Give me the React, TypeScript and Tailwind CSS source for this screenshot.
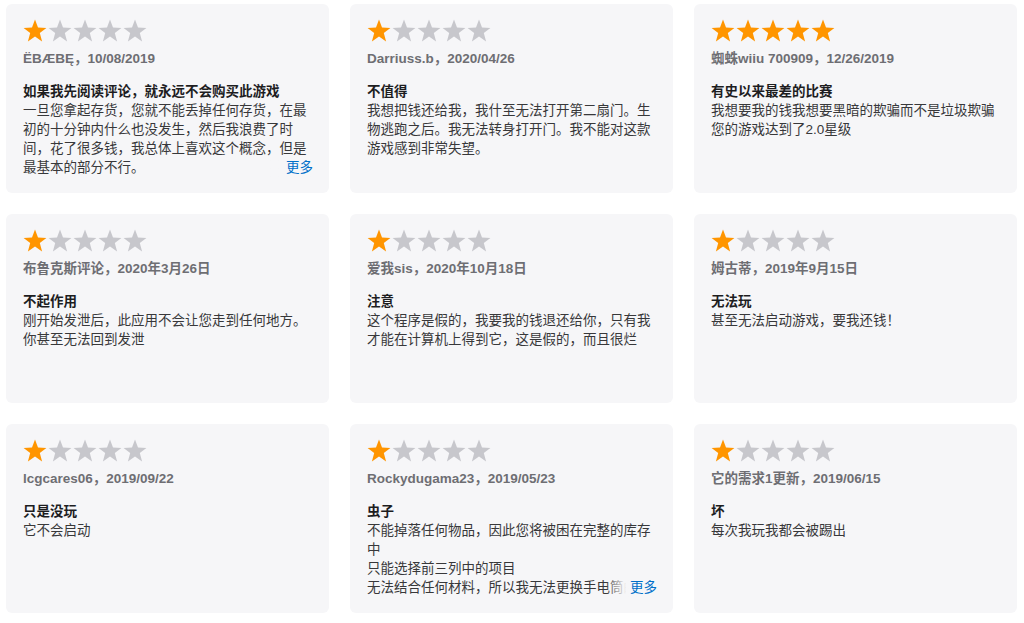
import React from "react";

type Review = {
  stars: number;
  author: string;
  date: string;
  title: string;
  body: string[];
  more?: boolean;
};

const reviews: Review[] = [
  {
    stars: 1,
    author: "ËBÆBĘ",
    date: "10/08/2019",
    title: "如果我先阅读评论，就永远不会购买此游戏",
    body: ["一旦您拿起存货，您就不能丢掉任何存货，在最初的十分钟内什么也没发生，然后我浪费了时间，花了很多钱，我总体上喜欢这个概念，但是最基本的部分不行。"],
    more: true,
  },
  {
    stars: 1,
    author: "Darriuss.b",
    date: "2020/04/26",
    title: "不值得",
    body: ["我想把钱还给我，我什至无法打开第二扇门。生物逃跑之后。我无法转身打开门。我不能对这款游戏感到非常失望。"],
  },
  {
    stars: 5,
    author: "蜘蛛wiiu 700909",
    date: "12/26/2019",
    title: "有史以来最差的比赛",
    body: ["我想要我的钱我想要黑暗的欺骗而不是垃圾欺骗您的游戏达到了2.0星级"],
  },
  {
    stars: 1,
    author: "布鲁克斯评论",
    date: "2020年3月26日",
    title: "不起作用",
    body: ["刚开始发泄后，此应用不会让您走到任何地方。你甚至无法回到发泄"],
  },
  {
    stars: 1,
    author: "爱我sis",
    date: "2020年10月18日",
    title: "注意",
    body: ["这个程序是假的，我要我的钱退还给你，只有我才能在计算机上得到它，这是假的，而且很烂"],
  },
  {
    stars: 1,
    author: "姆古蒂",
    date: "2019年9月15日",
    title: "无法玩",
    body: ["甚至无法启动游戏，要我还钱！"],
  },
  {
    stars: 1,
    author: "lcgcares06",
    date: "2019/09/22",
    title: "只是没玩",
    body: ["它不会启动"],
  },
  {
    stars: 1,
    author: "Rockydugama23",
    date: "2019/05/23",
    title: "虫子",
    body: [
      "不能掉落任何物品，因此您将被困在完整的库存中",
      "只能选择前三列中的项目",
      "无法结合任何材料，所以我无法更换手电筒的电池，这真的很烦人",
    ],
    more: true,
  },
  {
    stars: 1,
    author: "它的需求1更新",
    date: "2019/06/15",
    title: "坏",
    body: ["每次我玩我都会被踢出"],
  },
];

function Star({ on }: { on: boolean }) {
  return (
    <svg width="25" height="24" viewBox="0 0 25 24" className="shrink-0">
      <polygon
        points="12,0.5 15,8.6 23.4,8.9 16.8,14.1 19.1,22.4 12,17.6 4.9,22.4 7.2,14.1 0.6,8.9 9,8.6"
        fill={on ? "#ff9500" : "#c7c7cc"}
      />
    </svg>
  );
}

function Card({ r }: { r: Review }) {
  return (
    <div className="h-[189px] rounded-[6px] bg-[#f6f6f8] pl-[17px] pr-[16px] pt-[15px]">
      <div className="flex">
        {Array.from({ length: 5 }).map((_, i) => (
          <Star key={i} on={i < r.stars} />
        ))}
      </div>
      <div className="mt-[7px] text-[13.5px] leading-[18px] font-semibold text-[#6e6e73] whitespace-nowrap">
        {r.author}，{r.date}
      </div>
      <div className="mt-[14px] text-[13.5px] leading-[19px] font-bold text-[#1d1d1f]">{r.title}</div>
      <div className="relative text-[13.5px] leading-[19px] text-[#38383a]">
        <div className="line-clamp-4">
          {r.body.map((line, i) => (
            <div key={i}>{line}</div>
          ))}
        </div>
        {r.more && (
          <span className="absolute bottom-0 right-0 pl-[24px] bg-gradient-to-r from-transparent via-[#f6f6f8] via-[40%] to-[#f6f6f8] text-[#0070c9]">
            更多
          </span>
        )}
      </div>
    </div>
  );
}

export default function App() {
  return (
    <div
      className="w-[1024px] h-[623px] bg-white pt-[4px] pl-[6px]"
      style={{ fontFamily: '"Liberation Sans", "Noto Sans CJK SC", sans-serif' }}
    >
      <div className="grid grid-cols-[323px_323px_323px] gap-x-[21px] gap-y-[21px]">
        {reviews.map((r, i) => (
          <Card key={i} r={r} />
        ))}
      </div>
    </div>
  );
}
